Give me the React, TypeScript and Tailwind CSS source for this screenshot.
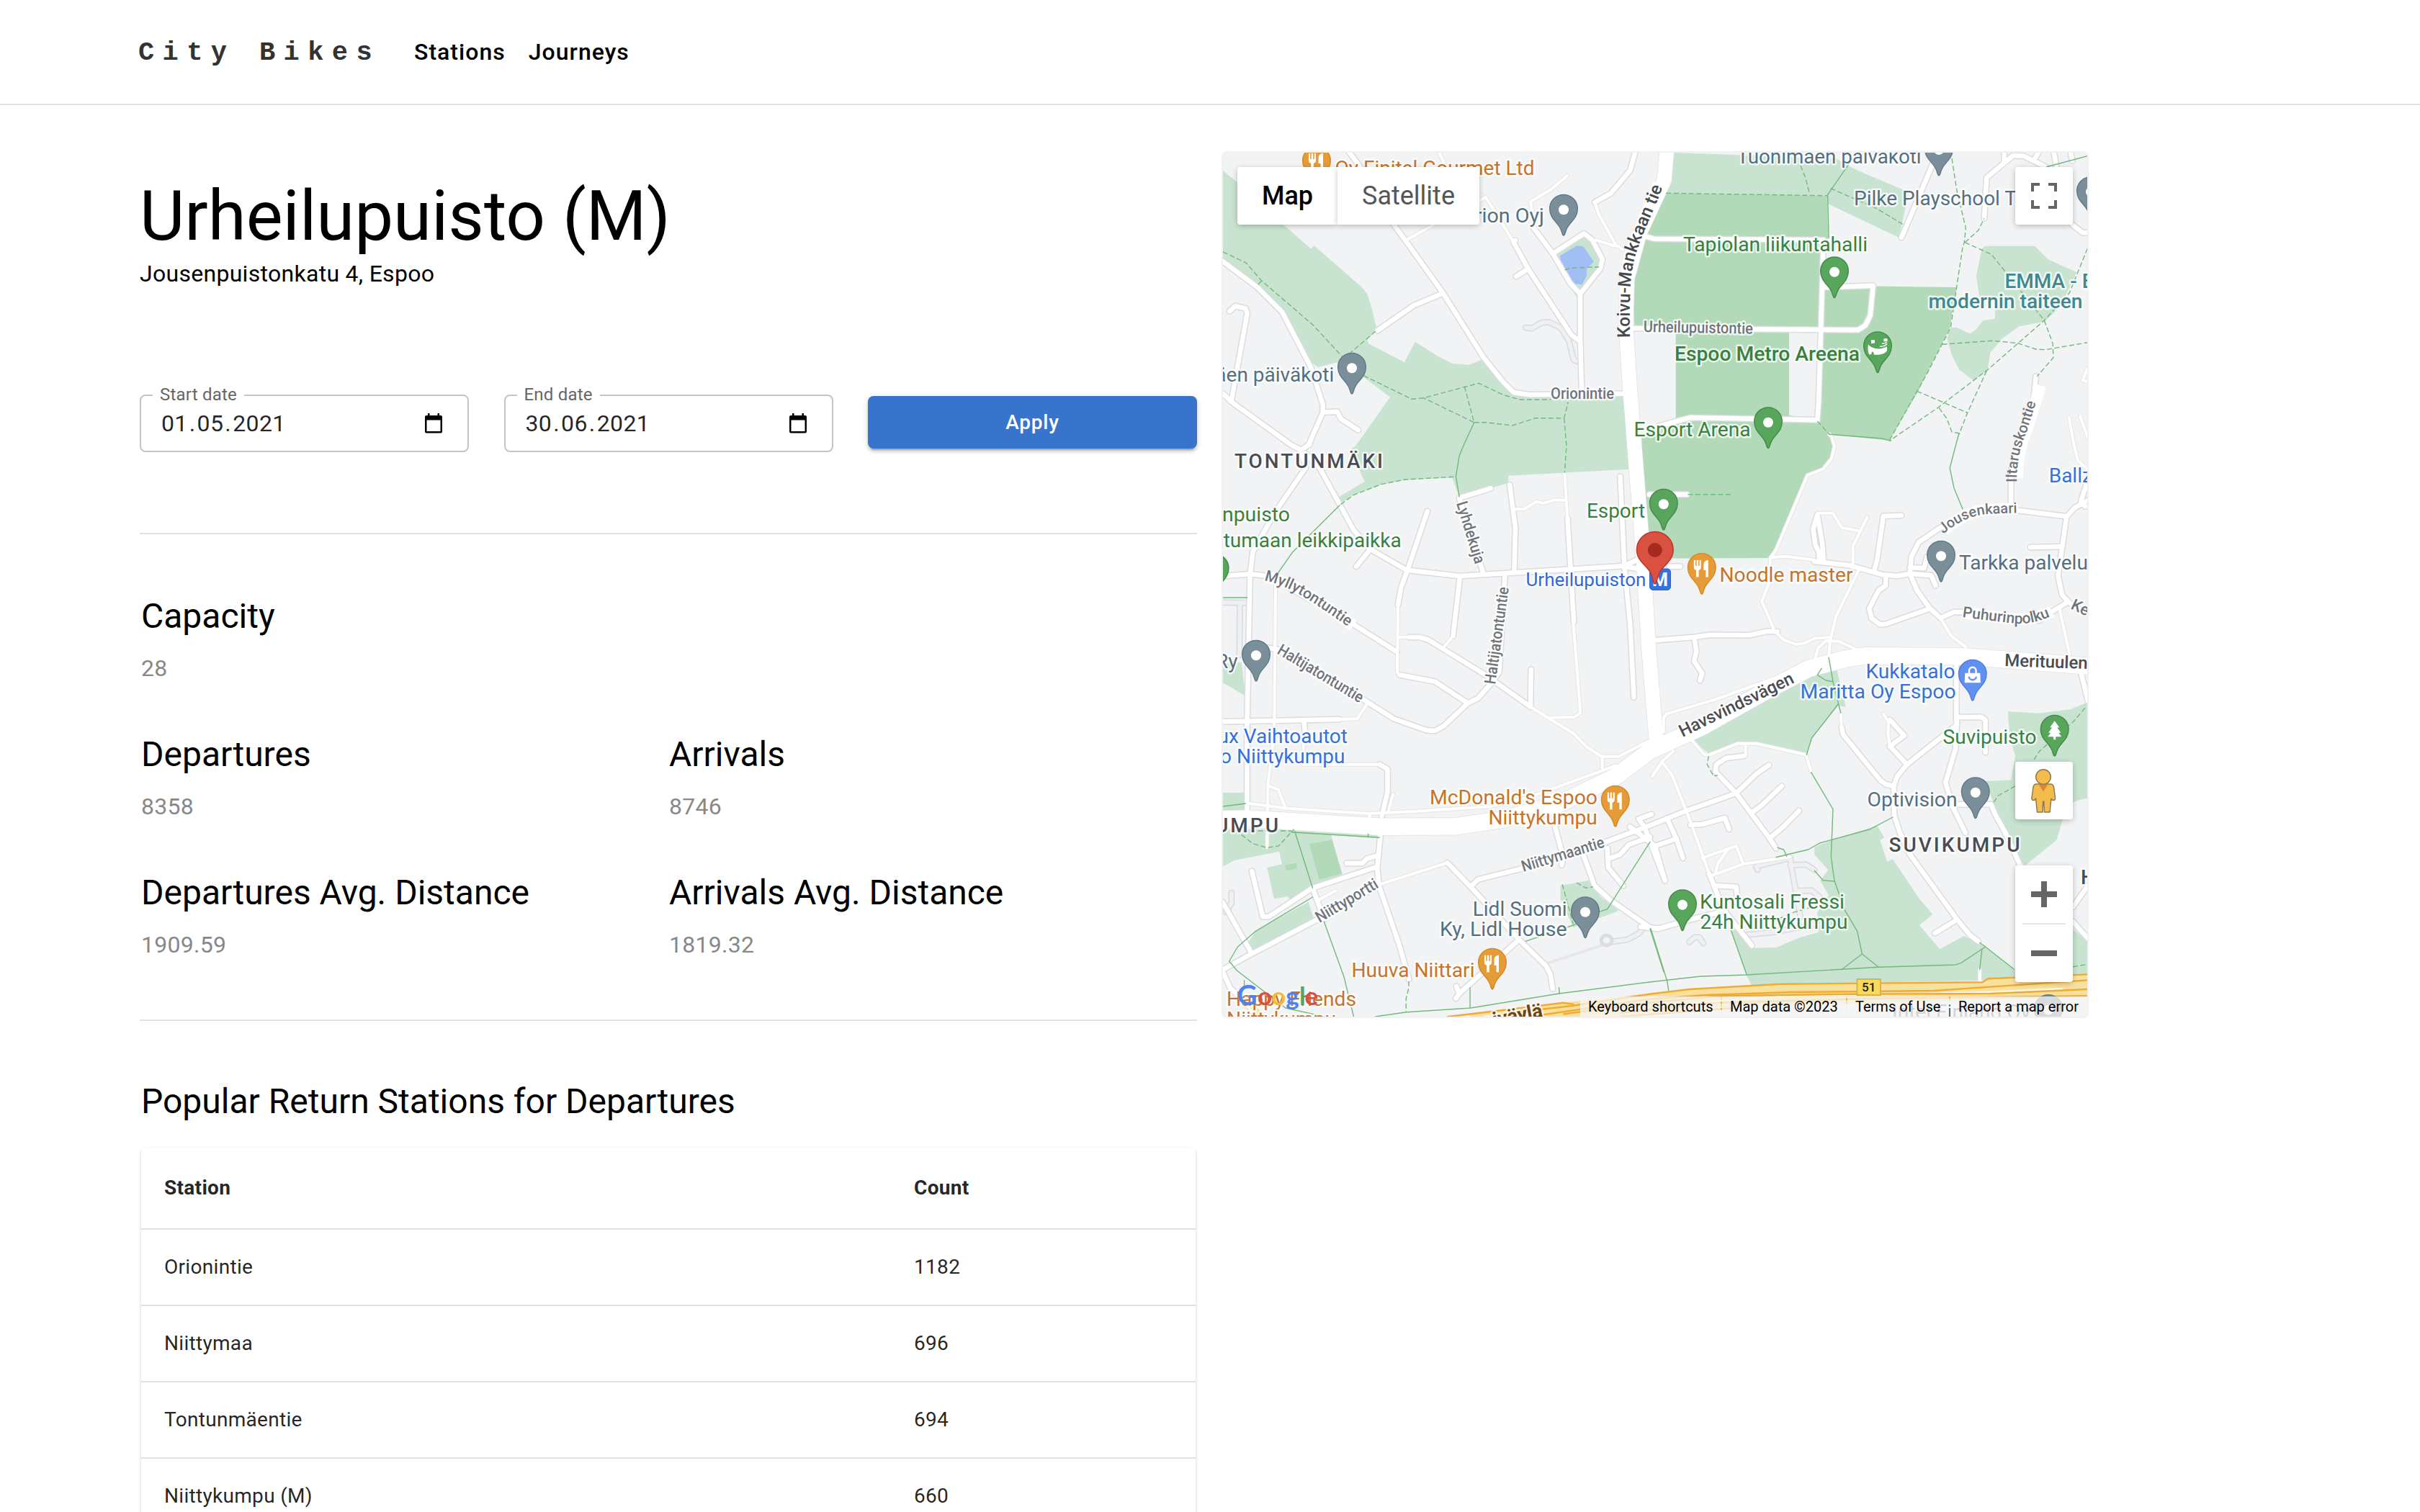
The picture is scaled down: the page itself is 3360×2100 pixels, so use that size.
import React from "react";

/* ---------- map geometry ---------- */

// Survey sheets: origin and scale used by the coordinate lists below.
const SHEETS: Record<string, [number, number, number, number]> = {
  A: [1690, 200, 3, 3],
  B: [2090, 200, 3, 3],
  C: [2490, 200, 3, 3],
  D: [1690, 600, 2.529, 3],
  E: [2290, 600, 2.529, 3],
  F: [1690, 1000, 2.529, 3],
  G: [2290, 1000, 2.529, 3],
};

function line(src: string, close = false): string {
  let sheet = SHEETS.A;
  const out: string[] = [];
  for (const tok of src.trim().split(/\s+/)) {
    if (SHEETS[tok]) {
      sheet = SHEETS[tok];
      continue;
    }
    const [px, py] = tok.split(",").map(Number);
    out.push(`${(sheet[0] + px / sheet[2]).toFixed(1)} ${(sheet[1] + py / sheet[3]).toFixed(1)}`);
  }
  return "M" + out.join("L") + (close ? "Z" : "");
}

const PARKS = [
  "A 24,110 90,165 275,335 391,437 404,424 600,595 625,625 645,690 665,775 625,815 630,832 780,910 824,824 920,885 980,915 1050,920 1108,896 1180,990 1240,1040 B 100,1045 490,1040 D 1437,0 1445,155 1022,182 1022,212 965,232 850,270 825,190 660,200 580,218 480,262 430,300 428,270 518,207 500,160 470,70 A 575,1260 720,1055 615,975 500,910 420,930 370,890 270,690 170,600 24,495",
  "B 700,36 C 180,60 215,85 290,120 455,190 480,200 440,390 145,250 140,215 B 670,205 690,150",
  "C 800,425 1005,425 1060,480 1180,535 1110,680 1045,740 940,760 870,810 820,870 808,945 750,985 690,940 660,880 640,810 655,765 680,765 735,790 760,775 790,735 840,728 840,640 775,640 762,550 785,435",
  "D 20,965 85,960 100,1100 20,1045",
  "E 560,1000 655,975 690,1145 665,1140 G 620,0 572,75 552,145 375,95 310,98 210,140 150,85 E 240,1220",
  "E 1260,1165 1370,1172 1480,1155 1530,1130 1540,1130 G 1540,325 1490,340 1450,420 1430,500 1320,605 1285,560 1210,350 1180,255 1270,250 1285,150 1270,90 1260,0",
  "G 800,440 825,490 810,500 835,590 855,580 945,740 995,810 948,855 1020,955 1105,900 1160,930 1285,1040 1487,1040 1487,870 1540,925 1540,1070 1180,1085 470,1100 360,1108 340,1060 285,870 340,890 355,950 445,948 530,905 595,885 590,800 630,730 600,670 628,625 580,560 580,530 640,500",
  "F 20,303 95,303 100,375 20,375",
  "F 20,455 260,455 400,480 440,645 330,695 255,750 248,735 200,745 175,615 228,600 218,548 100,575 60,585 20,610",
  "F 260,455 570,480 570,492 270,470",
  "F 320,758 340,830 120,965 105,935 135,880",
  "F 1205,690 1305,668 1345,735 1410,795 1250,865 1205,745",
  "B 205,460 328,385 362,400 400,490 312,610 295,635 265,580",
];

const SPORT = [
  "B 670,205 C 140,215 145,395 122,400 120,590 680,597 650,770 520,1030 400,1235 150,1210 E 640,20 650,60 640,110 610,155 555,180 445,490 420,525 0,527 -30,527 B 570,1260 550,1000 530,600 580,380",
  "F 323,515 403,500 438,640 358,665",
  "F 238,605 280,595 280,620 242,628",
];

const LAND = [
  "B 535,780 710,780 710,1148 600,1195 560,1230 540,1000",
  "B 1182,785 C 105,785 105,1080 90,1150 B 1182,1130",
  "C 147,395 147,588 122,588 122,400",
];

const POND = "B 228,465 300,423 325,427 368,490 340,520 338,550 320,585 287,583 258,535 248,518 230,485";

const STREETS = [
  "A 540,20 620,130 735,335 790,410 940,620 1110,890 1190,990 1235,1035 B 100,1045 490,1040",
  "A 24,490 165,595 270,700 390,930 440,1085 440,1118 380,1255 D 325,50 295,75",
  "A 440,1118 500,1115 515,1145 587,1192",
  "A 24,1040 60,1075 310,1255 D 295,75",
  "A 60,1065 125,705 118,685 75,675 52,697",
  "A 668,777 820,672 940,622",
  "B 35,410 95,520 275,795 305,818",
  "B 45,552 95,520",
  "B 35,410 42,402",
  "B 540,36 520,110 440,205 373,243",
  "B 115,345 200,460 270,580 312,625 312,800 318,1020",
  "B 200,455 328,373 362,400 405,480 395,520 312,625",
  "B 530,768 C 270,775 300,755 320,715 332,590 130,597",
  "B 585,385 620,395 C 125,400 115,760 105,1080 100,1150 B 770,1140 640,1175",
  "C 450,390 580,85",
  "C 795,310 805,140 915,48 960,50 1050,95",
  "C 878,36 878,70",
  "C 1020,36 1005,62",
  "C 1085,36 1095,90",
  "C 1155,36 1162,70",
  "C 1160,335 1205,370 1225,370",
  "C 1010,968 1000,1080 E 1325,0 1270,160 1270,320",
  "E 1280,325 1465,352 1495,315 1540,285",
  "E 1465,352 1435,600 1450,680 1475,712 1540,760",
  "E 1338,480 1445,478",
  "E 1540,200 1515,290 1530,310",
  "E 1515,1000 1540,1120",
  "E 1270,320 1150,340 1020,400 945,460 920,520 915,590 940,660 985,735 1022,775 1070,750 1110,750 1370,785 1400,758 1465,712",
  "E 915,590 870,600 820,595 700,555 580,540",
  "E 612,540 607,460 590,345 575,405 583,470 595,500 597,540",
  "E 790,575 800,530 822,350 885,348",
  "E 915,565 965,567 975,520",
  "E 915,590 990,598 1005,640",
  "E 830,605 830,640 805,660 772,735 780,775 810,802 830,800 980,738",
  "E 20,868 155,855 215,845 350,847 415,830 450,832",
  "E 158,860 165,915 157,955 185,1005 178,1035",
  "E 0,260 132,260",
  "E 70,560 108,560",
  "E 1078,970 1078,1200 G 1080,20 905,185 870,235 858,275 860,400 880,470 915,560 1080,830 1125,895 1155,922",
  "G 1080,0 1075,120 1040,260 1065,360 1110,470",
  "E 1090,1188 1165,1187 1180,1200 G 1180,0 1180,135",
  "G 845,110 905,185",
  "G 845,0 895,65 850,105",
  "E 675,1230 G 680,60 810,250 830,268 858,275",
  "G 1085,352 1200,352 1215,395 1250,470 1300,600 1320,640",
  "G 1070,840 1003,888",
  "G 1540,690 1487,780",
  "G 1487,840 1540,910",
  "G 210,640 260,790 360,940",
  "G 330,150 270,158 235,185 232,215 305,305 420,490 445,535",
  "G 360,385 395,355 465,275",
  "G 425,490 475,440 525,378",
  "G 145,437 185,435 265,408 280,455",
  "G 62,410 95,495 20,525",
  "G 95,495 118,575",
  "G -68,445 20,525 55,670",
  "G 230,690 305,695 308,740",
  "G -30,862 30,870 150,830 250,800",
  "D 310,150 200,340 125,500 115,600 105,1200 F 105,370",
  "D 295,75 310,150",
  "D 310,90 360,150 480,410 540,490 665,575 850,600 1430,558 1470,535",
  "D 488,560 540,485",
  "D 20,600 115,592 180,600 450,780 630,915",
  "D 738,330 670,570 645,650 635,720",
  "D 640,1012 765,1040 880,1130",
  "D 675,855 710,855 740,865 945,1015 1100,1145",
  "D 1252,790 1230,360",
  "D 852,605 828,850",
  "D 1010,600 990,1000 960,1050 915,1110 880,1130 795,1225 765,1245 735,1243 620,1195 440,1060 210,905 170,898",
  "D 935,590 850,275 960,235",
  "D 1027,220 1047,400 1043,580",
  "D 1415,185 1430,560 1450,800 1463,1105",
  "D 1430,560 1490,572",
  "D 1102,990 1100,1145",
  "D 20,1207 430,1197",
  "D 305,1210 308,1250 F 305,60",
  "F 570,185 598,205 598,300 578,400",
  "F 573,480 562,620 568,690 640,940 673,1080",
  "F 455,597 510,597 525,578 562,565",
  "F 560,612 335,700 180,820 160,820 122,630",
  "F 20,1040 120,975 370,820 568,690",
  "F 808,595 890,695 1060,915 1155,1025 1170,1060 1178,1120",
  "F 890,695 915,665 1060,622 1360,510 1518,440 G 125,380 305,305 375,225 420,188",
  "F 1185,440 1215,570 1210,605",
  "F 1285,560 1325,690 1380,750 1520,865 1545,868",
  "F 1525,393 1480,412 1500,445 1568,655",
  "F 1370,535 1373,615 1425,690",
  "F 1375,578 1415,560 1445,520 1520,488",
  "F 335,700 375,830",
  "F 20,760 120,970",
  "F 1060,915 850,1140 838,1160",
  "F 840,1110 850,1140",
  "F 20,1050 45,1115 130,1215",
];

const LANES = [
  "A 1095,235 1118,222 1150,270 1235,410",
  "A 785,402 912,330",
  "A 925,36 945,80",
  "B 373,243 390,295 460,420 490,440",
  "B 378,400 455,425",
  "B 258,132 190,190 105,240 120,340",
  "C 1225,935 1205,985 1225,990",
  "C 1148,1140 1170,1260 E 1505,120 1540,155",
  "C 1195,1135 1225,1220",
  "E 1440,735 1475,925",
  "E 1022,775 1060,850 1110,895 1115,920",
  "E 580,533 480,518 425,523",
  "C 150,1210 E 640,20 650,60 640,110 610,155 555,180 445,490 425,525 420,630 395,705 440,830 470,865 515,885 545,880 580,860 635,855",
  "E 590,338 645,338 675,398 735,412",
  "E 765,355 715,475 715,550",
  "E 735,575 655,770 635,870 630,940",
  "E 580,960 592,900 620,870 665,872 745,915",
  "E 50,1250 50,1190 60,1175 230,1115 560,975",
  "E 822,1175 840,1210 G 845,0",
  "E 840,1210 G 838,60 845,110",
  "E 672,1175 675,1230",
  "G 45,175 80,230 150,440 210,640",
  "G 10,235 45,172 85,130",
  "G 185,575 305,525 330,600 215,650",
  "G 275,540 240,600 232,640",
  "G 330,600 495,570",
  "G 150,85 190,140 205,148 310,98 375,98 550,145 568,215",
  "G 338,100 338,150",
  "G 1160,1040 1160,1085",
  "D 635,720 632,1000 640,1012",
  "D 640,855 675,855",
  "D 1100,1145 1160,1190 1255,1188 1275,1170 1250,790",
  "D 1230,360 1220,175",
  "D 1045,322 1080,320 1120,290 1145,297 1185,283 1225,285",
  "D 828,850 790,905",
  "D 525,1135 492,1195 430,1197",
  "D 205,640 200,1260 F 178,270 175,530",
  "F 305,60 300,185 570,185",
  "D 1160,1190 F 1250,55 1295,110 1350,152 1410,152 1515,88",
  "F 1352,152 1352,200",
  "F 115,348 245,368 530,390 700,380 960,360 1100,320 1400,190",
  "F 180,275 215,290 240,368",
  "F 617,310 600,385",
  "F 535,390 535,410",
  "F 570,685 808,595",
  "F 355,750 415,712",
  "F 1530,230 1560,180",
];

// Unpaved service ways, drawn in the land colour between grey casings.
const SERVICE = [
  "B 85,765 110,768 150,745 180,742 230,765 265,820 285,900 310,908",
  "D 20,710 100,712",
  "D 80,715 78,930",
  "G 380,625 375,610 495,575 500,620 530,820",
  "G 340,895 430,885 590,850",
  "G 495,605 550,602 580,625",
  "G 520,712 570,710 600,740",
  "G 140,925 160,905 175,905 190,930",
  "F 1380,925 1440,915 1480,890 1500,860",
  "F 50,720 50,765 30,800",
];

const ARTERIALS = [
  "B 672,36 662,150 560,370 508,560 502,750 518,1000 538,1260 D 1496,520 1515,900 1540,1260 F 1545,90",
];
const BOULEVARD =
  "F 20,413 105,411 570,445 840,443 1000,415 1200,350 1400,235 G 0,130 E 190,1225 400,1085 560,985 690,945 760,932 1100,935 1400,962 1540,975";

const TRAILS_DASHED = [
  "A 24,450 120,495 185,570 400,755 520,885",
  "A 185,570 170,585",
  "A 660,780 555,870",
  "A 610,965 810,1063 860,1058 1090,997 1190,1045 1260,1065 B 190,1065",
  "A 1030,1010 1070,1160 860,1058",
  "A 1070,1160 1120,1160 1230,1173 B 125,1142 245,1142 262,1075",
  "B 245,1142 255,1260 D 1225,80 1220,170",
  "B 670,205 C 140,215",
  "B 1230,90 1250,140 1268,210",
  "B 248,525 270,517 390,512",
  "D 830,187 660,198 575,218 480,262 430,305",
  "E 135,260 285,260",
  "C 155,185 340,265 465,340",
  "C 660,60 680,190 718,350 712,410 705,430 655,765 560,950 400,1235",
  "C 715,410 770,360 795,310",
  "C 715,410 825,460 1045,735 1080,830 1083,890 1015,968",
  "C 620,835 830,820 935,830 1010,855 1050,857 1225,827",
  "C 1225,435 1150,620 1045,735 810,940 600,1100 400,1237",
  "C 805,945 725,1120 690,1210",
  "C 515,1030 725,1120",
  "C 607,1100 640,1145 660,1200 690,1205",
  "C 100,1155 150,1210",
  "G 208,150 203,185 225,233 240,230",
  "E 1530,1150 G 1490,5 1370,130 1345,175",
  "G 1285,275 1225,315 1205,350",
  "G 1487,1028 1540,1018",
  "G 430,840 510,800 570,780",
  "F 673,1088 672,1120 663,1160 663,1215",
  "F 85,478 125,515 175,532 215,525 270,455",
  "F 90,462 260,462",
  "F 1212,685 1250,850",
  "F 1262,678 1295,700 1320,695",
];

const TRAILS = [
  "A 1070,1160 1020,1270 D 850,100 838,185 850,270",
  "D 430,305 265,500 215,585",
  "D 20,690 105,690",
  "C 140,215 230,85",
  "C 143,215 147,390",
  "C 150,1210 370,1227 405,1237",
  "C 690,1205 675,1260 E 1055,150 1070,235 1100,320",
  "C 1055,95 1225,50",
  "E 630,940 645,1040 672,1170",
  "E 645,1040 620,1035 590,1012 605,985",
  "E 662,1135 G 620,0 570,75 552,145",
  "G 568,218 645,372 638,570 650,670 685,790 730,880 747,975 805,1030",
  "G 747,975 675,1040",
  "G 445,572 480,562 558,540 600,512 775,455 855,405",
  "G 450,532 472,540 482,568",
  "G 580,628 610,668 650,672",
  "G 0,1092 180,1068 340,1062 805,1030 1075,1020 1095,1012 1180,945 1160,928",
  "G 1168,955 1160,1040",
  "G 1180,945 1280,1038",
  "G 5,870 62,1085 68,1130",
  "G 285,870 342,1062",
  "F 20,360 100,348",
  "F 260,467 570,490",
  "F 273,465 335,700",
  "F 530,475 530,488",
  "F 335,738 135,880 72,945 42,1005 70,1045 240,1200 400,1242",
  "F 95,1085 95,1120",
  "F 375,840 445,1070 480,1240",
  "F 1083,922 1250,855 1340,800 1370,788 1520,508",
  "F 555,1236 665,1217 890,1200 1200,1140 1518,1092",
  "F 888,1115 888,1198",
  "F 1200,1115 1202,1140",
  "F 1520,870 1568,1050",
];

const MOTORWAY =
  "F 800,1240 1030,1205 1215,1178 G -200,1165 0,1140 140,1120 460,1097 1170,1090 1190,1075 1540,1060 1540,1155 1200,1165 200,1200 -100,1240";
const MOTORWAY_LINES = [
  "F 810,1236 1030,1205 1215,1178 1250,1184",
  "F 1000,1225 1250,1190 G 0,1142 140,1122 460,1100 1170,1093 1190,1078 1540,1060",
  "F 1100,1236 G 0,1163 200,1146 500,1134 1000,1128 1540,1084",
  "G -300,1225 0,1178 250,1150 700,1142 1200,1140 1540,1122",
  "G -100,1220 200,1180 800,1160 1540,1150",
  "G -100,1236 300,1200",
];

const GREEN = "#3a8141";
const ORANGE = "#c87328";
const SLATE = "#566f7f";
const BLUE = "#3570de";
const GREY = "#70747a";
const INK = "#494d52";
const TEAL = "#3f8891";

type Label = {
  t: string;
  x: number;
  y: number;
  c: string;
  w?: number;
  s?: number;
  b?: number;
  end?: boolean;
  r?: number;
  ls?: number;
};

const LABELS: Label[] = [
  { t: "Oy Finitel Gourmet Ltd", x: 1853.5, y: 242.7, w: 277, c: ORANGE },
  { t: "Orion Oyj", x: 2144, y: 309, c: SLATE, end: true, w: 116 },
  { t: "Tuonimäen päiväkoti", x: 2411.500, y: 226.7, w: 256, c: SLATE },
  { t: "Pilke Playschool T", x: 2574, y: 284.7, w: 226, c: SLATE },
  { t: "Tapiolan liikuntahalli", x: 2337, y: 349, w: 256, c: GREEN },
  { t: "EMMA - E", x: 2783.5, y: 400, c: TEAL, b: 500, w: 123 },
  { t: "modernin taiteen", x: 2677.5, y: 428, c: TEAL, b: 500, w: 214 },
  { t: "Urheilupuistontie", x: 2281.7, y: 461, w: 152, c: GREY, s: 22, b: 500, r: 1 },
  { t: "Espoo Metro Areena", x: 2325, y: 500.7, w: 257, c: GREEN, b: 500 },
  { t: "Orionintie", x: 2153, y: 554, w: 88, c: GREY, s: 22, b: 500 },
  { t: "Esport Arena", x: 2268.5, y: 605.7, w: 162, c: GREEN },
  { t: "Tontunmäen päiväkoti", x: 1852.3, y: 530, c: SLATE, end: true },
  { t: "TONTUNMÄKI", x: 1714, y: 650, w: 209, c: INK, b: 500, ls: 3 },
  { t: "npuisto", x: 1697, y: 724, w: 94, c: GREEN },
  { t: "tumaan leikkipaikka", x: 1698.7, y: 760, w: 247, c: GREEN },
  { t: "Lyhdekuja", x: 2022, y: 699, w: 89, c: GREY, s: 22, b: 500, r: 73 },
  { t: "Esport", x: 2203, y: 719, w: 81, c: GREEN },
  { t: "Urheilupuiston", x: 2118.500, y: 814, w: 167, c: "#3369d6", s: 26 },
  { t: "Noodle master", x: 2387.5, y: 808, w: 185, c: ORANGE },
  { t: "Haltijatontuntie", x: 1772, y: 907, w: 135, c: GREY, s: 22, b: 500, r: 31 },
  { t: "Haltijatontuntie", x: 2076, y: 951, w: 136, c: GREY, s: 22, b: 500, r: -82 },
  { t: "Ry", x: 1718.5, y: 928, c: SLATE, end: true },
  { t: "Ballzy", x: 2844.7, y: 670, c: BLUE },
  { t: "Tarkka palvelut", x: 2720, y: 791, w: 188, c: SLATE },
  { t: "Kesäkuja", x: 2874, y: 845, c: GREY, s: 22, b: 500, r: 25 },
  { t: "Merituulentie", x: 2783, y: 925, c: INK, s: 24, b: 500, r: 2 },
  { t: "Havsvindsvägen", x: 2336, y: 1024, w: 174, c: INK, s: 24, b: 500, r: -26 },
  { t: "Kukkatalo", x: 2590.5, y: 941.7, w: 124, c: BLUE },
  { t: "Maritta Oy Espoo", x: 2499.5, y: 969.5, w: 216, c: BLUE },
  { t: "Suvipuisto", x: 2697.5, y: 1032.7, w: 130, c: GREEN },
  { t: "Delux Vaihtoautot", x: 1871, y: 1032, c: BLUE, end: true },
  { t: "Espoo Niittykumpu", x: 1867.5, y: 1060, c: BLUE, end: true },
  { t: "McDonald's Espoo", x: 1985, y: 1117, w: 233, c: ORANGE },
  { t: "Niittykumpu", x: 2066.4, y: 1145, w: 151.5, c: ORANGE },
  { t: "NIITTYKUMPU", x: 1778, y: 1155.500, c: INK, b: 500, ls: 3, end: true },
  { t: "Niittymaantie", x: 2115, y: 1211, w: 119, c: GREY, s: 22, b: 500, r: -17 },
  { t: "Niittyportti", x: 1832, y: 1282, w: 97, c: GREY, s: 22, b: 500, r: -31 },
  { t: "Lidl Suomi", x: 2044.7, y: 1272, w: 131, c: SLATE },
  { t: "Ky, Lidl House", x: 1999, y: 1300, w: 176.5, c: SLATE },
  { t: "Huuva Niittari", x: 1876.5, y: 1357, w: 171, c: ORANGE },
  { t: "Happy Friends", x: 1703, y: 1396.7, w: 180, c: ORANGE },
  { t: "Niittykumpu", x: 1703, y: 1425, w: 152, c: ORANGE },
  { t: "Länsiväylä", x: 2143, y: 1412, c: "#6b4513", s: 27, b: 700, end: true, r: -11 },
  { t: "Optivision", x: 2592.5, y: 1119.7, w: 125, c: SLATE },
  { t: "SUVIKUMPU", x: 2622.5, y: 1183, w: 185, c: INK, b: 500, ls: 3 },
  { t: "Kuntosali Fressi", x: 2360, y: 1262, w: 201, c: GREEN },
  { t: "24h Niittykumpu", x: 2360.5, y: 1290, w: 205, c: GREEN },
  { t: "HANNUS", x: 2889, y: 1228, c: INK, b: 500, ls: 3 },
  { t: "Intel Finland Oy", x: 2627, y: 1415, w: 192, c: SLATE },
];

const CURVED = [
  { id: "koivu", t: "Koivu-Mankkaan tie", c: "#45494e", s: 24.5, d: "M2263 469 C2262 400 2264 372 2274 345 C2283 318 2298 290 2312 250" },
  { id: "mylly", t: "Myllytontuntie", c: GREY, s: 21, d: "M1755 806 Q1782 812 1810 829 T1878 875" },
  { id: "jousen", t: "Jousenkaari", c: GREY, s: 20, d: "M2698 742 Q2728 716 2760 714 T2830 712" },
  { id: "iltarus", t: "Iltaruskontie", c: GREY, s: 20.5, d: "M2800 670 Q2800 630 2814 600 L2834 536" },
  { id: "puhuri", t: "Puhurinpolku", c: GREY, s: 21, d: "M2724 857 Q2770 863 2800 866 Q2830 868 2865 846" },
];

type PinKind = "dot" | "food" | "shop" | "tree" | "arena";
const PIN_COLORS = {
  slate: ["#7b8f9b", "#627a87"],
  green: ["#58a65c", "#458b49"],
  orange: ["#e59b37", "#d68a28"],
  blue: ["#6191f0", "#4f80e2"],
} as const;

const PINS: [number, number, keyof typeof PIN_COLORS, PinKind][] = [
  [1877, 547.7, "slate", "dot"],
  [2171, 327.7, "slate", "dot"],
  [2692, 244.5, "slate", "dot"],
  [2903, 303, "slate", "dot"],
  [2695, 808.7, "slate", "dot"],
  [1744, 946.7, "slate", "dot"],
  [2742.8, 1137.3, "slate", "dot"],
  [2201, 1303.3, "slate", "dot"],
  [2844, 1439, "slate", "dot"],
  [2547, 414.3, "green", "dot"],
  [2607, 518.3, "green", "arena"],
  [2455, 623.3, "green", "dot"],
  [2309.8, 736.7, "green", "dot"],
  [1686.6, 827, "green", "dot"],
  [2336, 1293.3, "green", "dot"],
  [2852.7, 1050.7, "green", "tree"],
  [1828, 261, "orange", "food"],
  [2362.8, 826, "orange", "food"],
  [2242.8, 1148.7, "orange", "food"],
  [2072, 1374.7, "orange", "food"],
  [2738.8, 973.7, "blue", "shop"],
];

function PinGlyph({ kind }: { kind: PinKind }) {
  if (kind === "food")
    return (
      <g fill="#fff">
        <path d="M-11 -48h2.2v8h1.6v-8h2.4v8h1.6v-8h2.2v9.500c0 3-1.400 4-3.200 4.300v9.700h-3.600v-9.700c-1.800-.3-3.200-1.300-3.200-4.300z" />
        <path d="M9 -48v23.500H5.600v-9.500H2.600v-7.500c0-4 2.400-6.500 6.400-6.500z" />
      </g>
    );
  if (kind === "shop")
    return (
      <g>
        <path d="M-10.500 -39h21l.6 13.500h-22.200z" fill="#fff" />
        <path d="M-4.800 -38v-4a4.800 5 0 0 1 9.600 0v4" fill="none" stroke="#fff" strokeWidth="2.400" />
        <path d="M-5 -34a5 4.500 0 0 0 10 0" fill="none" stroke="#6191f0" strokeWidth="2.400" />
      </g>
    );
  if (kind === "tree")
    return (
      <path d="M0 -49.500l6.500 9h-3l5 7.500h-3l4 5.500h-8v4h-3v-4h-8l4-5.500h-3l5-7.500h-3z" fill="#fff" />
    );
  if (kind === "arena")
    return (
      <g fill="#fff">
        <path d="M-13 -40c5 7 18 8 26 3v6c-2 3-6 5-12 5.500h-6l-1-4h-2l-1 3.500h-3c-1.500-4-2-9-1-14z" />
        <path d="M-9 -46h5v4l-5 1zM8.500 -48h5v4h-5z" />
        <path d="M3 -37c4 0 8-1 10-4M6 -41c3 0 5-1 7-2" stroke="#fff" strokeWidth="1.500" fill="none" />
      </g>
    );
  return <circle cx="0" cy="-36.500" r="7" fill="#fff" />;
}

function Strokes({ list, color, width, dash }: { list: string[]; color: string; width: number; dash?: string }) {
  return (
    <g fill="none" stroke={color} strokeWidth={width} strokeLinejoin="round" strokeLinecap={dash ? "butt" : "round"} strokeDasharray={dash}>
      {list.map((s) => (
        <path key={s} d={line(s)} />
      ))}
    </g>
  );
}

function MapDrawing() {
  return (
    <svg viewBox="1698 212 1200 1200" className="block h-[1200px] w-[1200px]" fontFamily="Roboto, sans-serif">
      <rect x="1698" y="212" width="1200" height="1200" fill="#f1f3f4" />
      {PARKS.map((p) => <path key={p} d={line(p, true)} fill="#c8e3cf" />)}
      {SPORT.map((p) => <path key={p} d={line(p, true)} fill="#b2dab9" />)}
      {LAND.map((p) => <path key={p} d={line(p, true)} fill="#f1f3f4" />)}
      <path d={line(POND, true)} fill="#a1bff5" />

      <Strokes list={["F 1155,1015 1360,935"]} color="#e6e7e9" width={4} />
      <Strokes list={SERVICE} color="#dcdde0" width={9} />
      <Strokes list={SERVICE} color="#eef0f2" width={5.5} />
      <ellipse cx="2230.500" cy="1306" rx="7.500" ry="7" fill="#f1f3f4" stroke="#dcdde0" strokeWidth="5" />
      <Strokes list={LANES} color="#e4e5e5" width={6} />
      <Strokes list={STREETS} color="#dbdce0" width={9.5} />
      <Strokes list={ARTERIALS} color="#dfe0e3" width={21.5} />
      <Strokes list={[BOULEVARD]} color="#dfe0e3" width={25} />
      <Strokes list={LANES} color="#ffffff" width={4} />
      <Strokes list={STREETS} color="#ffffff" width={6.5} />
      <Strokes list={ARTERIALS} color="#ffffff" width={20} />
      <Strokes list={[BOULEVARD]} color="#ffffff" width={23.5} />
      <Strokes list={TRAILS_DASHED} color="#74b97c" width={1.4} dash="7 3.5" />
      <Strokes list={TRAILS} color="#74b97c" width={1.4} />

      <path d={line(MOTORWAY, true)} fill="#fae19b" />
      <Strokes list={["G 150,1180 500,1148 780,1145 1180,1134 1450,1120"]} color="#fdf6e3" width={2.5} />
      <Strokes list={MOTORWAY_LINES} color="#efab37" width={2.4} />
      <path d="M1733 1395l12 4 12 13h-14z" fill="#fae19b" />

      {LABELS.map((l, i) => (
        <text
          key={i}
          x={l.x}
          y={l.y}
          fill={l.c}
          fontSize={l.s ?? 28}
          fontWeight={l.b ?? 400}
          textAnchor={l.end ? "end" : "start"}
          letterSpacing={l.ls}
          textLength={l.w}
          lengthAdjust="spacingAndGlyphs"
          transform={l.r ? `rotate(${l.r} ${l.x} ${l.y})` : undefined}
          stroke="#ffffff"
          strokeOpacity="0.75"
          strokeWidth="5"
          strokeLinejoin="round"
          paintOrder="stroke"
        >
          {l.t}
        </text>
      ))}
      {CURVED.map((l) => (
        <g key={l.id}>
          <path d={l.d} fill="none" stroke="#ffffff" strokeWidth="16" strokeDasharray={`${l.t.length * l.s * 0.5} 400`} transform={l.id === "koivu" ? "translate(-7 -2)" : "translate(1 -6)"} />
          <path id={l.id} d={l.d} fill="none" />
          <text fill={l.c} fontSize={l.s} fontWeight={500}>
            <textPath href={`#${l.id}`}>{l.t}</textPath>
          </text>
        </g>
      ))}

      {PINS.map(([x, y, color, kind], i) => (
        <g key={i} transform={`translate(${x} ${y})`}>
          <path
            d="M0 -.8C-2.200 -.8 -1.500 -5 -5 -11.500C-9.500 -20 -19.300 -24.500 -19.300 -38A19.300 19.300 0 1 1 19.300 -38C19.300 -24.500 9.500 -20 5 -11.500C1.500 -5 2.200 -.8 0 -.8Z"
            fill={PIN_COLORS[color][0]}
            stroke={PIN_COLORS[color][1]}
            strokeWidth="1.500"
          />
          <PinGlyph kind={kind} />
        </g>
      ))}

      <g>
        <rect x="2290.500" y="790" width="29" height="29.500" rx="4.500" fill="#3471e3" stroke="#2c62cc" />
        <text x="2305" y="813.500" fill="#fff" fontSize="25" fontWeight="700" textAnchor="middle">M</text>
      </g>
      <path
        d="M2297.800 811C2295 811 2296 804 2291 794.500C2285 784 2272.500 779 2272.500 763.500A25.300 25 0 1 1 2323.100 763.500C2323.100 779 2310.600 784 2304.600 794.500C2299.600 804 2300.600 811 2297.800 811Z"
        fill="#d95140"
        stroke="#b93429"
        strokeWidth="1.500"
      />
      <circle cx="2297.800" cy="764" r="10" fill="#a52a20" />

      <rect x="2578.500" y="1360" width="32.500" height="22" fill="#f9da5b" stroke="#d8b545" strokeWidth="2" />
      <text x="2594.700" y="1377" fill="#222" fontSize="17" fontWeight="500" textAnchor="middle">51</text>

      <text y="1395.500" fontFamily="Lato, sans-serif" fontSize="35" fontWeight="700">
        <tspan x="1717.500" fontSize="38.500" fill="#4f83ec">G</tspan>
        <tspan x="1746" fill="#d8503f">o</tspan>
        <tspan x="1765.300" fill="#f2bb3c">o</tspan>
        <tspan x="1785.300" fill="#4f83ec">g</tspan>
        <tspan x="1804" fill="#57a55b">l</tspan>
        <tspan x="1811.500" fill="#d8503f">e</tspan>
      </text>
    </svg>
  );
}

/* ---------- map controls ---------- */

const CONTROL = "bg-white shadow-[0_2px_8px_-1px_rgba(0,0,0,0.3)]";

function Pegman() {
  return (
    <svg viewBox="0 0 80 80" className="h-20 w-20">
      <g stroke="#8a7a55" strokeWidth="1.500" strokeLinejoin="round">
        <path d="M29 31h20c3 0 4 2 4.500 4l2 15c.3 2-.6 3.500-2.500 3.500s-2.500-1-3-2.500l-2 19h-7.500l-.8-15h-1l-.7 15H30.500l-2-19c-.5 1.500-1.300 2.500-3 2.500-2 0-2.800-1.500-2.500-3.500l2-15c.5-2 1.500-4 4-4z" fill="#f4bd4b" />
        <circle cx="39" cy="21" r="10.300" fill="#f4bd4b" />
      </g>
      <path d="M32 30.500c4 2 10 2 14 0l-7 11z" fill="#d9853a" />
    </svg>
  );
}

function MapCard() {
  return (
    <section className="relative h-[1204px] w-[1204px] shrink-0 overflow-hidden rounded-lg border-2 border-[#f1f1f2] bg-[#f1f1f2]">
      <MapDrawing />

      <div className="absolute top-5 left-5 flex h-20 text-[36px] leading-none">
        <button className={`w-[139px] rounded-l-[4px] font-medium text-black ${CONTROL}`}>Map</button>
        <button className={`w-[197px] rounded-r-[4px] text-[#565656] ${CONTROL}`}>Satellite</button>
      </div>

      <button className={`absolute top-5 right-5 grid h-20 w-20 place-items-center rounded-[4px] ${CONTROL}`}>
        <svg viewBox="0 0 36 36" className="h-9 w-9" fill="none" stroke="#666" strokeWidth="4">
          <path d="M2 12V2h10M24 2h10v10M34 24v10H24M12 34H2V24" />
        </svg>
      </button>

      <button className={`absolute top-[846px] right-5 rounded-[4px] ${CONTROL}`}>
        <Pegman />
      </button>

      <div className={`absolute top-[990px] right-5 flex h-[162px] w-20 flex-col items-center rounded-[4px] ${CONTROL}`}>
        <button className="grid h-20 w-20 place-items-center">
          <svg viewBox="0 0 36 36" className="h-9 w-9" fill="#666">
            <path d="M14 0h8v14h14v8H22v14h-8V22H0v-8h14z" />
          </svg>
        </button>
        <div className="h-0.5 w-[60px] bg-[#e6e6e6]" />
        <button className="grid h-20 w-20 place-items-center">
          <span className="h-2 w-9 bg-[#666]" />
        </button>
      </div>

      <div className="absolute right-0 bottom-0 flex h-7 gap-0.5 text-[20px] leading-[29px] whitespace-nowrap text-black">
        <span className="w-[195px] bg-[#f5f5f5]/75 pl-[11px]">Keyboard shortcuts</span>
        <span className="w-[172px] bg-[#f5f5f5]/75 pl-[11px]">Map data ©2023</span>
        <span className="w-[141px] bg-[#f5f5f5]/75 pl-[11px]">Terms of Use</span>
        <span className="w-[190px] bg-[#f5f5f5]/75 pl-[11px]">Report a map error</span>
      </div>
    </section>
  );
}

/* ---------- page ---------- */

function DateField({ label, parts }: { label: string; parts: string[] }) {
  return (
    <div className="relative flex h-20 w-[457px] items-center justify-between rounded-lg border-2 border-[#c4c4c4] pr-[34px] pl-[26px]">
      <span className="absolute -top-[16px] left-4 bg-white px-[10px] text-[24px] leading-[28px] tracking-[0.009em] text-[#666]">{label}</span>
      <span className="flex text-[32px] leading-none tracking-[0.012em] text-black/87">
        {parts.map((p, i) => (
          <React.Fragment key={p}>
            {i > 0 && <span>.</span>}
            <span className="px-0.5">{p}</span>
          </React.Fragment>
        ))}
      </span>
      <svg viewBox="0 0 26 28" className="h-7 w-[26px]">
        <path d="M5 0h2.500v3h11V0H21v3h2a2 2 0 0 1 2 2v20.500a2 2 0 0 1-2 2H3a2 2 0 0 1-2-2V5a2 2 0 0 1 2-2h2zM3.500 9.500V25h19V9.500z" fill="#000" fillRule="evenodd" />
      </svg>
    </div>
  );
}

function Stat({ title, value }: { title: string; value: string }) {
  return (
    <div>
      <h3 className="text-[48px] leading-[64px]">{title}</h3>
      <p className="mt-4 text-[32px] leading-[48px] tracking-[0.009em] text-[#888]">{value}</p>
    </div>
  );
}

const ROWS: [string, number][] = [
  ["Orionintie", 1182],
  ["Niittymaa", 696],
  ["Tontunmäentie", 694],
  ["Niittykumpu (M)", 660],
];

export default function App() {
  return (
    <div className="h-[2100px] w-[3360px] overflow-hidden bg-white font-['Roboto',sans-serif] text-black">
      <header className="flex h-[146px] items-center border-b-2 border-[#e0e0e0] pl-[192px]">
        <a className="w-[383px] pt-1 font-['Liberation_Mono',monospace] text-[37px] font-bold tracking-[11.400px] whitespace-nowrap text-[#333]">City Bikes</a>
        <nav className="flex gap-8 text-[32px] font-medium tracking-[0.032em]">
          <a>Stations</a>
          <a>Journeys</a>
        </nav>
      </header>

      <main className="flex gap-[34px] pt-16 pl-[194px]">
        <div className="w-[1468px] pt-[34px]">
          <h1 className="text-[96px] leading-[112px]">Urheilupuisto (M)</h1>
          <p className="text-[32px] leading-[48px] tracking-[0.009em]">Jousenpuistonkatu 4, Espoo</p>

          <div className="mt-36 flex items-start justify-between">
            <DateField label="Start date" parts={["01", "05", "2021"]} />
            <DateField label="End date" parts={["30", "06", "2021"]} />
            <button className="mt-0.5 h-[73px] w-[457px] rounded-lg bg-[#3874cb] text-[28px] font-medium tracking-[0.029em] text-white shadow-[0_6px_2px_-4px_rgba(0,0,0,0.2),0_4px_4px_0_rgba(0,0,0,0.14),0_2px_10px_0_rgba(0,0,0,0.12)]">
              Apply
            </button>
          </div>

          <hr className="mt-28 border-t-2 border-[#e0e0e0]" />

          <div className="mt-[82px] grid grid-cols-2 gap-y-16 pl-0.5">
            <div className="col-span-2">
              <Stat title="Capacity" value="28" />
            </div>
            <Stat title="Departures" value="8358" />
            <Stat title="Arrivals" value="8746" />
            <Stat title="Departures Avg. Distance" value="1909.59" />
            <Stat title="Arrivals Avg. Distance" value="1819.32" />
          </div>

          <hr className="mt-20 border-t-2 border-[#e0e0e0]" />

          <h2 className="mt-20 pl-0.5 text-[48px] leading-[64px]">Popular Return Stations for Departures</h2>

          <div className="mx-0.5 mt-8 rounded-lg text-[28px] tracking-[0.011em] text-black/87 shadow-[0_4px_2px_-2px_rgba(0,0,0,0.2),0_2px_2px_0_rgba(0,0,0,0.14),0_2px_6px_0_rgba(0,0,0,0.12)]">
            <div className="flex h-[114px] items-center border-b-2 border-[#e0e0e0] pl-8 font-bold">
              <span className="w-[1041px]">Station</span>
              <span>Count</span>
            </div>
            {ROWS.map(([name, count]) => (
              <div key={name} className="flex h-[106px] items-center border-b-2 border-[#e0e0e0] pl-8">
                <span className="w-[1041px]">{name}</span>
                <span>{count}</span>
              </div>
            ))}
          </div>
        </div>

        <MapCard />
      </main>
    </div>
  );
}
